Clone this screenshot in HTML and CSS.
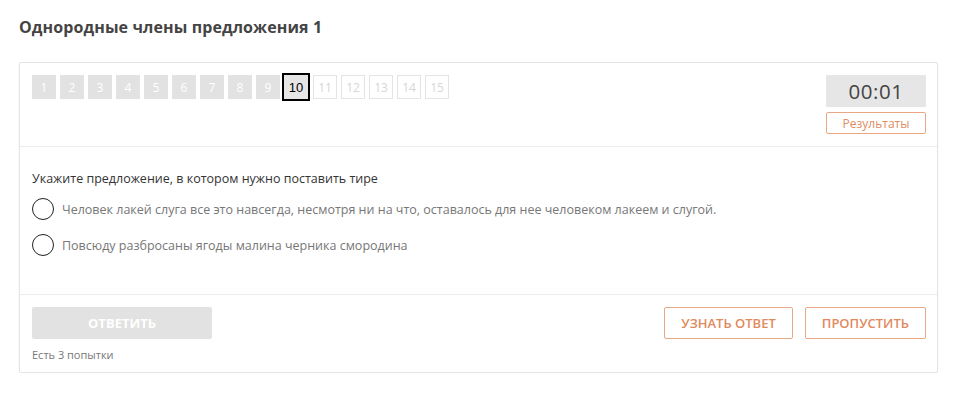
FILE: index.html
```html
<!DOCTYPE html>
<html lang="ru">
<head>
<meta charset="utf-8">
<link rel="stylesheet" href="styles.css">
</head>
<body>
<div class="page">
  <h1 class="title">Однородные члены предложения 1</h1>
  <div class="card">
    <div class="card-head">
      <div class="pager">
        <span class="pg done">1</span>
        <span class="pg done">2</span>
        <span class="pg done">3</span>
        <span class="pg done">4</span>
        <span class="pg done">5</span>
        <span class="pg done">6</span>
        <span class="pg done">7</span>
        <span class="pg done">8</span>
        <span class="pg done">9</span>
        <span class="pg current">10</span>
        <span class="pg todo">11</span>
        <span class="pg todo">12</span>
        <span class="pg todo">13</span>
        <span class="pg todo">14</span>
        <span class="pg todo">15</span>
      </div>
      <div class="timer-col">
        <div class="timer">00:01</div>
        <button class="results">Результаты</button>
      </div>
    </div>
    <div class="card-body">
      <p class="question">Укажите предложение, в котором нужно поставить тире</p>
      <label class="option"><span class="radio"></span><span class="opt-text">Человек лакей слуга все это навсегда, несмотря ни на что, оставалось для нее человеком лакеем и слугой.</span></label>
      <label class="option"><span class="radio"></span><span class="opt-text">Повсюду разбросаны ягоды малина черника смородина</span></label>
    </div>
    <div class="card-foot">
      <div class="foot-left">
        <button class="answer">ОТВЕТИТЬ</button>
        <div class="tries">Есть 3 попытки</div>
      </div>
      <div class="foot-right">
        <button class="outline-btn">УЗНАТЬ ОТВЕТ</button>
        <button class="outline-btn">ПРОПУСТИТЬ</button>
      </div>
    </div>
  </div>
</div>
</body>
</html>
```

FILE: styles.css
```css
* { box-sizing: border-box; }
html, body { margin: 0; padding: 0; background: #fff; }
body { font-family: "Open Sans", "Liberation Sans", sans-serif; color: #333; }
.page { padding: 16px 40px 0 19px; }
.title {
  margin: 0 0 24px;
  font-size: 16px;
  font-weight: 700;
  color: #444;
  line-height: 22px;
  letter-spacing: 0.1px;
}
.card {
  border: 1px solid #e4e4e4;
  border-radius: 2px;
  box-shadow: 0 1px 2px rgba(0,0,0,0.07);
  background: #fff;
}
.card-head {
  display: flex;
  justify-content: space-between;
  padding: 12px 11px 12px 12px;
  border-bottom: 1px solid #ececec;
}
.pager { display: flex; align-items: flex-start; gap: 4px; }
.pg {
  width: 24px; height: 24px;
  display: flex; align-items: center; justify-content: center;
  font-size: 12px;
  font-family: "Open Sans", sans-serif;
}
.pg.done { background: #e2e2e2; color: #fff; }
.pg.current {
  width: 28px; height: 28px;
  margin: -2px -1px 0 -2px;
  background: #e6e6e6;
  border: 2px solid #000;
  color: #000;
  font-family: "Liberation Sans", Arial, sans-serif;
  font-size: 13px;
}
.pg.todo { border: 1px solid #e4e4e4; color: #d6d6d6; background: #fff; }
.timer-col { display: flex; flex-direction: column; gap: 5px; width: 100px; }
.timer {
  height: 32px;
  background: #e6e6e6;
  color: #444;
  font-size: 20.5px;
  line-height: 32px;
  text-align: center;
  letter-spacing: 0.5px;
}
.results {
  height: 22px;
  border: 1px solid #eba783;
  border-radius: 2px;
  background: #fff;
  color: #e08d63;
  font-family: "Open Sans", sans-serif;
  font-size: 12px;
  padding: 0;
}
.card-body {
  padding: 23px 12px 31px;
  border-bottom: 1px solid #ececec;
}
.question { margin: 0 0 3px; font-size: 12.5px; line-height: 18px; color: #333; }
.option {
  display: flex;
  align-items: center;
  gap: 8px;
  height: 36px;
}
.radio {
  width: 22px; height: 22px;
  border: 1.5px solid #222;
  border-radius: 50%;
  flex: none;
}
.opt-text { font-size: 12.5px; color: #777; }
.card-foot {
  display: flex;
  justify-content: space-between;
  padding: 12px 11px 10px 12px;
}
.answer {
  width: 180px; height: 32px;
  background: #e2e2e2;
  border: none;
  border-radius: 2px;
  color: #fff;
  font-family: "Open Sans", sans-serif;
  font-weight: 700;
  font-size: 13px;
  padding: 0;
}
.tries { margin-top: 8px; font-size: 11px; color: #777; }
.foot-right { display: flex; gap: 12px; align-items: flex-start; }
.outline-btn {
  height: 32px;
  padding: 0 16px;
  background: #fff;
  border: 1px solid #e9a885;
  border-radius: 2px;
  color: #e08a5e;
  font-family: "Open Sans", sans-serif;
  font-weight: 600;
  font-size: 13px;
}
```
